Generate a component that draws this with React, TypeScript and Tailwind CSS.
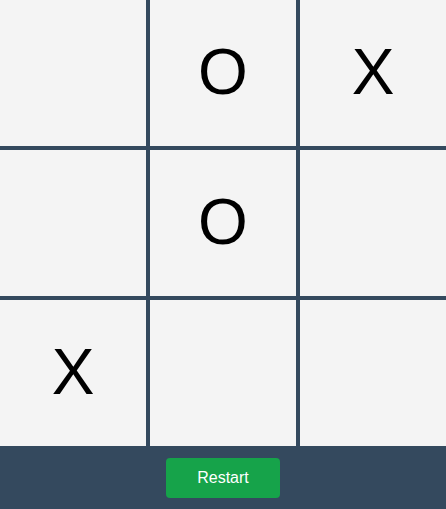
import React, { useState } from "react";

export default function App() {
  const [board, setBoard] = useState<(string | null)[]>([
    null, "O", "X",
    null, "O", null,
    "X", null, null,
  ]);
  return (
    <div className="w-[446px] h-[509px] bg-[#34495e] flex flex-col" style={{ fontFamily: '"Liberation Sans", Arial, sans-serif' }}>
      <div className="grid grid-cols-[146px_146px_146px] grid-rows-[146px_146px_146px] gap-[4px] bg-[#34495e]">
        {board.map((v, i) => (
          <button
            key={i}
            className="bg-[#f4f4f4] flex items-center justify-center text-[64px] leading-none text-black pb-[2px]"
            onClick={() => {
              if (v) return;
              const b = [...board];
              b[i] = "X";
              setBoard(b);
            }}
          >
            {v}
          </button>
        ))}
      </div>
      <div className="h-[63px] flex items-center justify-center">
        <button
          className="w-[114px] h-[40px] rounded-[4px] bg-[#16a34a] text-white text-[16px]"
          onClick={() => setBoard(Array(9).fill(null))}
        >
          Restart
        </button>
      </div>
    </div>
  );
}
